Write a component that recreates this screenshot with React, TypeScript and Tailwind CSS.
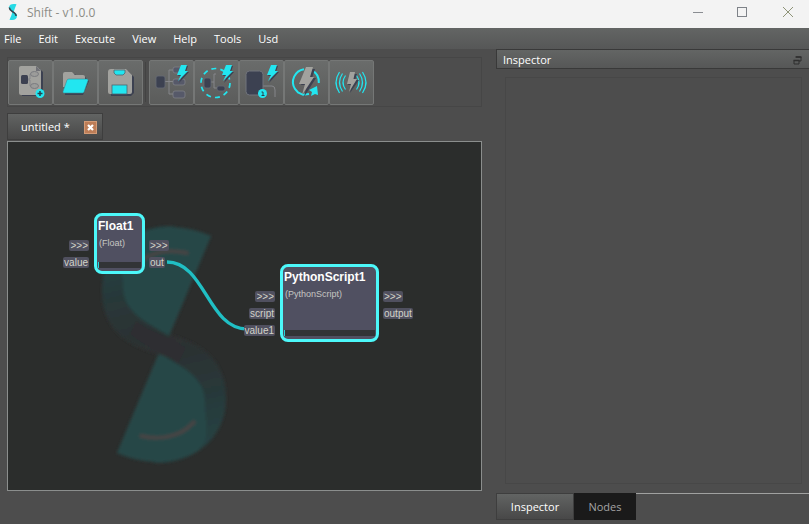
import type { ReactNode } from "react";

const UI_FONT = "font-['Open_Sans','Noto_Sans',sans-serif]";
const NODE_FONT = "font-['Liberation_Sans',Arial,sans-serif]";

const CYAN = "#22e6f0";
const GREY = "#a2a29e";
const DARK = "#3c4151";
const EDGE = "#85868a";

const MENUS = ["File", "Edit", "Execute", "View", "Help", "Tools", "Usd"];

function LogoMark() {
  return (
    <svg viewBox="0 0 10 18" className="h-[18px] w-[10px]" aria-hidden="true">
      <path d="M8.500 1.300C5 .3 1 1 1 4.500c0 3 2.500 3.500 4.500 5L7 5z" fill="#27dbe6" />
      <path d="M1.500 16.700c4 1 7.500 0 7.500-3.700C9 10 6.500 9.500 4.500 8.300L3.500 12z" fill="#27dbe6" />
      <path d="M1.300 4.500c.3 3.500 3.200 3.500 5.200 5.500 1 .9 1.700 1.700 1.600 3" fill="none" stroke="#34434c" strokeWidth="1.600" />
    </svg>
  );
}

function Bolt() {
  return (
    <>
      <path d="M33 6h6l-2 6h3L30 23l3-7h-4z" fill={DARK} />
      <path d="M32 5h6l-2 6h3L29 21l3-6h-4z" fill={CYAN} />
    </>
  );
}

function NewIcon() {
  return (
    <>
      <path d="M14 8h17l4 4v22l-2 2H14z" fill={DARK} />
      <path d="M13 6h15l5 4v22q0 3-3 3H13q-2 0-2-2V8q0-2 2-2z" fill={GREY} />
      <path d="M28 6v5h5z" fill="#6f7076" />
      <rect x="13" y="15" width="7" height="9" rx="1.500" fill={DARK} />
      <path d="M20 19h2V14h1M20 20h2v6h1" fill="none" stroke={EDGE} />
      <ellipse cx="26.500" cy="14" rx="4" ry="2.500" fill="#9c9c9a" stroke="#7a7b80" />
      <ellipse cx="26.500" cy="26" rx="4" ry="2.500" fill="#9c9c9a" stroke="#7a7b80" />
      <circle cx="32" cy="33.500" r="4.500" fill={CYAN} />
      <path d="M32 31v5M29.500 33.500h5" stroke="#26424e" strokeWidth="1.500" />
    </>
  );
}

function OpenIcon() {
  return (
    <>
      <path d="M12 14h10l2 3h8l4 4-6 14H12z" fill={DARK} />
      <path d="M10 14q0-2 2-2h7l3 3h8q2 0 2 2v10H10z" fill={GREY} />
      <path d="M16 19h18q1.500 0 1 1.500L31 32q-.5 1-1.500 1H11q-1.500 0-1-1.500L14 20q.5-1 2-1z" fill={CYAN} stroke="#3d8c96" strokeWidth=".6" />
    </>
  );
}

function SaveIcon() {
  return (
    <>
      <path d="M13 11h17l6 6v16l-3 3H13z" fill={DARK} />
      <path d="M13 9h15l6 6v17q0 2-2 2H12q-2 0-2-2V12q0-3 3-3z" fill={GREY} />
      <path d="M16 10h11v3l-2 2h-7l-2-2z" fill={CYAN} stroke="#4b6670" strokeWidth=".8" />
      <rect x="14" y="25" width="15" height="9" fill={CYAN} stroke="#4b6670" strokeWidth=".8" />
    </>
  );
}

function ExecuteIcon() {
  return (
    <>
      <path d="M16 21.500h8M20 34V10h4M20 34h4" fill="none" stroke={EDGE} />
      <rect x="7" y="16" width="9" height="12" rx="2" fill={DARK} stroke="#666a75" strokeWidth=".8" />
      <g fill="#565969" stroke="#7f8087" strokeWidth=".8">
        <rect x="24" y="7" width="12" height="6" rx="2" />
        <rect x="24" y="19" width="12" height="6" rx="2" />
        <rect x="24" y="31" width="12" height="7" rx="2" />
      </g>
      <Bolt />
    </>
  );
}

function ExecuteSelectedIcon() {
  return (
    <>
      <circle cx="21.500" cy="23" r="14.500" fill="none" stroke={CYAN} strokeWidth="1.700" strokeDasharray="5 4.100" />
      <path d="M17 22h3v-8h2M20 22v6h3" fill="none" stroke={EDGE} />
      <rect x="10" y="18" width="7" height="10" rx="2" fill={DARK} stroke="#666a75" strokeWidth=".8" />
      <rect x="23" y="26" width="8" height="5" rx="2" fill={DARK} stroke="#666a75" strokeWidth=".8" />
      <Bolt />
    </>
  );
}

function ExecuteOnceIcon() {
  return (
    <>
      <path d="M24 26h9q3 0 3 4v7" fill="none" stroke={EDGE} />
      <rect x="7" y="11" width="17" height="24" rx="3.500" fill={DARK} stroke="#71747c" />
      <circle cx="23.500" cy="33.500" r="4.500" fill={CYAN} />
      <path d="M22.500 32h1.500v3M22.500 35.500h3" fill="none" stroke="#26424e" />
      <Bolt />
    </>
  );
}

function LoopIcon() {
  return (
    <>
      <path d="M20 9.200A13 13 0 0 0 11 29l3 3.500 5 2.300 6-.8M28 10.500A13 13 0 0 1 34.800 23" fill="none" stroke={CYAN} strokeWidth="2" />
      <path d="M25 30l8-4 1 9-3-1-4 2 1-4z" fill={CYAN} />
      <path d="M24 9h7l-3 9h4L20 37l3-12h-6z" fill={DARK} />
      <path d="M22 7h7l-3 10h4L18 35l3-11h-6z" fill={GREY} />
    </>
  );
}

function LiveIcon() {
  return (
    <>
      <g fill="none" stroke={CYAN} strokeWidth="1.200">
        <path d="M10.500 12q-7 10.500 0 21M13.500 13.500q-6 9 0 18M16.500 15.500q-5 7 0 14" />
        <path d="M33.500 12q7 10.500 0 21M30.500 13.500q6 9 0 18M27.500 15.500q5 7 0 14" />
      </g>
      <path d="M23 14h5l-2 6h4l-9 13 2-8h-4z" fill={DARK} />
      <path d="M21 12h5l-1.500 7H28l-8 13 2-8h-4z" fill={GREY} />
    </>
  );
}

function ToolButton({ label, children }: { label: string; children: ReactNode }) {
  return (
    <button
      type="button"
      aria-label={label}
      className="h-[45px] w-[45px] rounded-xs border border-[#757776] bg-linear-to-b from-[#6a6c6b] to-[#5b5c5b]"
    >
      <svg viewBox="1 1 43 43" className="block h-[43px] w-[43px]" aria-hidden="true">
        {children}
      </svg>
    </button>
  );
}

function Toolbar() {
  return (
    <div role="toolbar" aria-label="Main" className="mt-2 flex h-[50px] items-center border border-[#464646]">
      <ToolButton label="New"><NewIcon /></ToolButton>
      <ToolButton label="Open"><OpenIcon /></ToolButton>
      <ToolButton label="Save"><SaveIcon /></ToolButton>
      <div className="mx-[2px] h-10 w-px bg-[#434343]" />
      <div className="ml-px flex">
        <ToolButton label="Execute all"><ExecuteIcon /></ToolButton>
        <ToolButton label="Execute selected"><ExecuteSelectedIcon /></ToolButton>
        <ToolButton label="Execute once"><ExecuteOnceIcon /></ToolButton>
        <ToolButton label="Loop"><LoopIcon /></ToolButton>
        <ToolButton label="Live"><LiveIcon /></ToolButton>
      </div>
    </div>
  );
}

function WatermarkHalf() {
  return (
    <>
      <path d="M150 190C182 197 218 210 218 256C218 300 181 321 149 321L109 311L150 212z" fill="url(#band)" />
      <path d="M151 211C172 224 198 234 197 262C197 282 204 294 190 309C168 323 135 323 109 311z" fill="#254646" />
      <path d="M133 294C150 298 172 296 186 280" fill="none" stroke="#4a4545" strokeWidth="3.500" strokeLinecap="round" />
    </>
  );
}

function Watermark() {
  return (
    <svg className="absolute left-0 top-0 h-[348px] w-[473px]" viewBox="0 0 473 348" aria-hidden="true">
      <defs>
        <linearGradient id="band" gradientUnits="userSpaceOnUse" x1="165" y1="195" x2="195" y2="315">
          <stop offset="0" stopColor="#2d2f30" />
          <stop offset=".5" stopColor="#283839" />
          <stop offset="1" stopColor="#254445" />
        </linearGradient>
        <filter id="soften"><feGaussianBlur stdDeviation="1.500" /></filter>
      </defs>
      <g filter="url(#soften)">
        <WatermarkHalf />
        <g transform="rotate(180 156 202.500)"><WatermarkHalf /></g>
        <path d="M128 178C140 190 158 192 178 206L170 222C156 208 138 206 122 192z" fill="#2d2f30" />
      </g>
    </svg>
  );
}

function Port({ name }: { name: string }) {
  return (
    <span className="block h-[11px] rounded-xs bg-[#50505f] px-px text-[10px] leading-[11px] text-[#d3d3c8]">
      {name}
    </span>
  );
}

type NodeProps = {
  title: string;
  type: string;
  inputs: string[];
  outputs: string[];
  place: string;
  size: string;
};

function GraphNode({ title, type, inputs, outputs, place, size }: NodeProps) {
  return (
    <div className={`absolute ${place} ${size} ${NODE_FONT}`}>
      <div className="flex h-full flex-col rounded-lg border-3 border-[#4cf8fa] bg-[#505061] px-px pb-[3px]">
        <div className="text-[12px] leading-[20px] font-bold whitespace-nowrap text-white">{title}</div>
        <div className="px-px text-[9px] leading-[14px] whitespace-nowrap text-[#c6c6c2]">{type}</div>
        <div className="mt-auto h-[6px] border-l border-[#22d5dc] bg-[#323436]" />
      </div>
      <div className="absolute right-full top-[27px] mr-[5px] flex flex-col items-end gap-[6px]">
        {inputs.map((p) => <Port key={p} name={p} />)}
      </div>
      <div className="absolute left-full top-[27px] ml-[4px] flex flex-col items-start gap-[6px]">
        {outputs.map((p) => <Port key={p} name={p} />)}
      </div>
    </div>
  );
}

function Canvas() {
  return (
    <div className="relative mb-[33px] flex-1 overflow-hidden border border-[#8b8e8d] bg-[#2b2d2c]">
      <Watermark />
      <GraphNode
        title="Float1"
        type="(Float)"
        inputs={[">>>", "value"]}
        outputs={[">>>", "out"]}
        place="left-[86px] top-[71px]"
        size="h-[61px] w-[51px]"
      />
      <svg className="absolute left-0 top-0 h-[348px] w-[473px]" viewBox="0 0 473 348" aria-hidden="true">
        <path d="M159 120C197 120 200 187 239 187" fill="none" stroke="#20bfc4" strokeWidth="3.400" />
      </svg>
      <GraphNode
        title="PythonScript1"
        type="(PythonScript)"
        inputs={[">>>", "script", "value1"]}
        outputs={[">>>", "output"]}
        place="left-[272px] top-[122px]"
        size="h-[78px] w-[99px]"
      />
    </div>
  );
}

function TitleBar() {
  return (
    <header className="flex h-7 items-center bg-[#f3f3f3] pl-2 text-[12px] text-[#8c8c86]">
      <div className="flex h-full items-start pt-[3px]"><LogoMark /></div>
      <h1 className="ml-[9px] pb-[2px]">Shift - v1.0.0</h1>
      <div className="mr-[15px] mb-1 ml-auto flex gap-[33px]">
        <button type="button" aria-label="Minimize">
          <svg viewBox="0 0 12 12" className="block size-3"><path d="M1 6.500h10" stroke="#8a8d92" /></svg>
        </button>
        <button type="button" aria-label="Maximize">
          <svg viewBox="0 0 12 12" className="block size-3"><rect x=".5" y="1.500" width="9" height="9" fill="none" stroke="#7e8288" /></svg>
        </button>
        <button type="button" aria-label="Close">
          <svg viewBox="0 0 12 12" className="block size-3"><path d="M1 1l10 10M11 1L1 11" stroke="#8f9478" /></svg>
        </button>
      </div>
    </header>
  );
}

export default function App() {
  return (
    <div className={`flex h-screen flex-col overflow-hidden bg-[#4d4d4d] text-[11px] text-white ${UI_FONT}`}>
      <TitleBar />
      <nav className="flex h-[21px] items-center gap-[17px] bg-linear-to-b from-[#636564] to-[#565757] pt-px pl-1">
        {MENUS.map((m) => <button key={m} type="button">{m}</button>)}
      </nav>
      <main className="flex min-h-0 flex-1">
        <section className="flex min-w-0 flex-1 flex-col pr-[14px] pl-[7px]">
          <Toolbar />
          <div role="tablist" className="mt-[6px] flex h-[28px]">
            <div className="flex h-[27px] w-[96px] items-center justify-between border border-[#3e3e3e] bg-linear-to-b from-[#626463] to-[#484848] pt-px pr-[5px] pl-[13px]">
              <button type="button" role="tab" aria-selected="true">untitled *</button>
              <button type="button" aria-label="Close tab" className="border border-[#d39b76] bg-[#bd7d57]">
                <svg viewBox="0 0 11 11" className="block size-[11px]">
                  <path d="M3 3l5 5M8 3l-5 5" stroke="#fff" strokeWidth="2.200" />
                </svg>
              </button>
            </div>
          </div>
          <Canvas />
        </section>
        <aside className="flex w-[313px] flex-col">
          <div className="flex h-[20px] items-center justify-between border border-r-0 border-[#393939] bg-linear-to-b from-[#636564] to-[#565757] pt-[2px] pr-[7px] pl-[6px]">
            <h2>Inspector</h2>
            <button type="button" aria-label="Float panel">
              <svg viewBox="0 0 9 9" className="block size-[9px]">
                <path d="M3 1h5v4H6M1 4.500h5V8H1z" fill="none" stroke="#2f2f2f" />
                <path d="M2.500 1h6M.5 4.500h6" stroke="#2f2f2f" strokeWidth="1.500" />
              </svg>
            </button>
          </div>
          <div className="mt-2 mr-[7px] mb-[9px] ml-[9px] flex-1 border border-[#474747]" />
          <div role="tablist" className="mb-[4px] flex h-[27px]">
            <button type="button" role="tab" aria-selected="true" className="w-[78px] border border-[#3e3e3e] bg-linear-to-b from-[#626463] to-[#484848] pt-px">
              Inspector
            </button>
            <button type="button" role="tab" aria-selected="false" className="w-[62px] bg-[#1a1a1a] pt-px text-[#a4a4a4]">
              Nodes
            </button>
            <div className="flex-1 border-t border-[#a0a1a0]" />
          </div>
        </aside>
      </main>
    </div>
  );
}
